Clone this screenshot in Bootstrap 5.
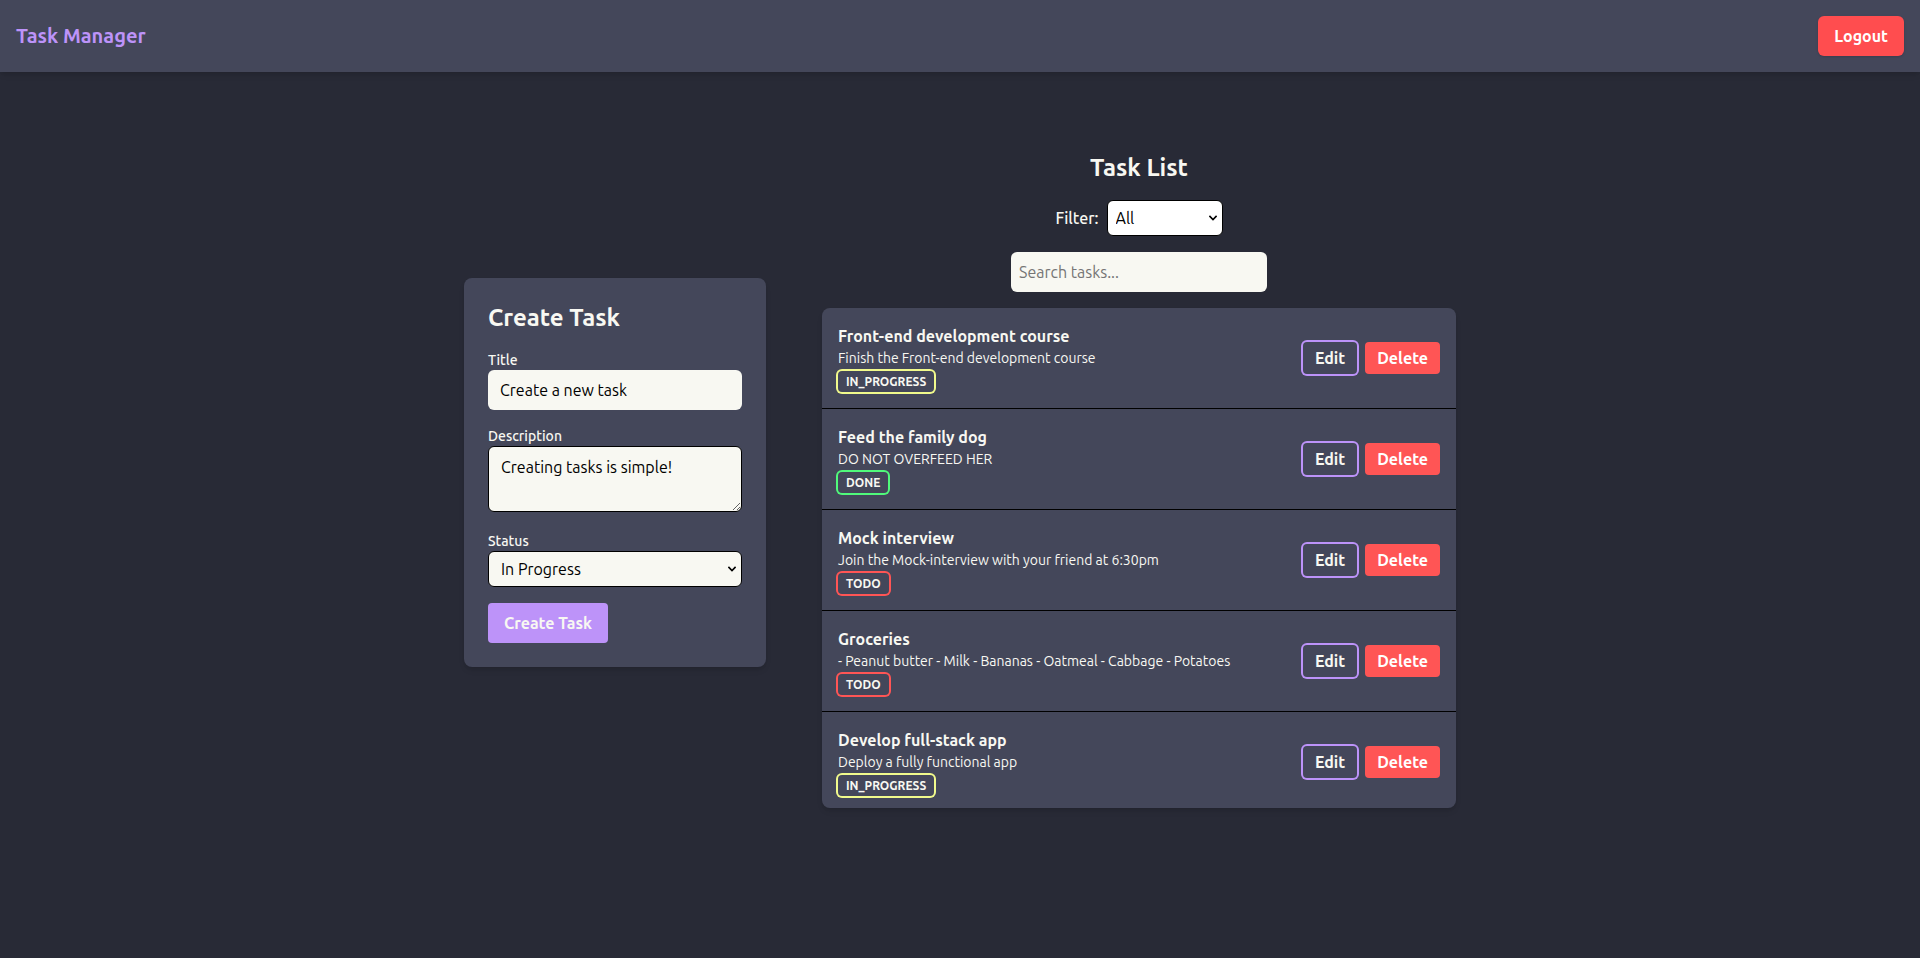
<!DOCTYPE html>
<html lang="en">
<head>
<meta charset="utf-8">
<meta name="viewport" content="width=device-width, initial-scale=1">
<title>Task Manager</title>
<link href="https://cdn.jsdelivr.net/npm/bootstrap@5.3.0/dist/css/bootstrap.min.css" rel="stylesheet">
<style>
  :root {
    --bg: #282a36;
    --panel: #44475a;
    --light: #f8f8f2;
    --purple: #bd93f9;
    --red: #ff5555;
    --green: #50fa7b;
    --yellow: #f1fa8c;
  }
  body {
    background: var(--bg);
    color: var(--light);
    font-family: Ubuntu, "Noto Sans", sans-serif;
    font-size: 16px;
    line-height: 24px;
  }
  .topbar {
    background: var(--panel);
    box-shadow: 0 4px 6px -1px rgba(0, 0, 0, .1), 0 2px 4px -2px rgba(0, 0, 0, .1);
  }
  .topbar .navbar-brand { color: var(--purple); font-size: 20px; line-height: 30px; }
  .btn {
    --bs-btn-border-width: 0;
    --bs-btn-font-weight: 600;
    --bs-btn-line-height: 24px;
    --bs-btn-padding-x: 16px;
    --bs-btn-padding-y: 8px;
    --bs-btn-border-radius: 4px;
  }
  .btn-logout {
    --bs-btn-border-radius: 6px;
    --bs-btn-color: #fff;
    --bs-btn-bg: #ff4d4f;
    --bs-btn-hover-color: #fff;
    --bs-btn-hover-bg: #e64547;
    box-shadow: 0 1px 3px rgba(0, 0, 0, .1), 0 1px 2px -1px rgba(0, 0, 0, .1);
  }
  .btn-create {
    --bs-btn-color: var(--light);
    --bs-btn-bg: var(--purple);
    --bs-btn-hover-color: var(--light);
    --bs-btn-hover-bg: #a97ef0;
  }
  .btn-row { --bs-btn-padding-x: 12px; --bs-btn-padding-y: 4px; }
  .btn-edit {
    --bs-btn-color: var(--light);
    --bs-btn-hover-color: var(--light);
    --bs-btn-hover-bg: #565a72;
    box-shadow: 0 0 0 2px var(--purple);
  }
  .btn-delete {
    --bs-btn-color: #fff;
    --bs-btn-bg: var(--red);
    --bs-btn-hover-color: #fff;
    --bs-btn-hover-bg: #e64a4a;
  }
  .board { max-width: 1024px; }
  .board-grid { display: grid; gap: 32px; }
  @media (min-width: 992px) {
    .board-grid { grid-template-columns: 302px minmax(0, 1fr); column-gap: 56px; }
  }
  .panel {
    background: var(--panel);
    border-radius: 8px;
    box-shadow: 0 4px 6px -1px rgba(0, 0, 0, .1), 0 2px 4px -2px rgba(0, 0, 0, .1);
  }
  .heading { font-size: 24px; line-height: 32px; font-weight: 600; }
  .field-label { display: block; font-size: 14px; line-height: 20px; font-weight: 500; }
  .field {
    display: block;
    width: 100%;
    padding: 8px 12px;
    border: 0;
    border-radius: 6px;
    background: var(--light);
    color: #000;
    line-height: 24px;
  }
  textarea.field, select.field { border: 1px solid #000; }
  .field-group-text { margin-bottom: 19px; }
  .chevron {
    height: 36px;
    appearance: none;
    background-image: url("data:image/svg+xml,%3Csvg xmlns='http://www.w3.org/2000/svg' width='10' height='6'%3E%3Cpath d='M1.4 .9 5 4.5 8.6 .9' fill='none' stroke='%23000' stroke-width='1.6'/%3E%3C/svg%3E");
    background-repeat: no-repeat;
    background-position: right 4px center;
  }
  select.field { padding: 5px 20px 5px 12px; }
  .filter-select {
    width: 116px;
    padding: 5px 20px 5px 8px;
    border: 1px solid #000;
    border-radius: 6px;
    background-color: #fff;
    color: #000;
  }
  .search-box { width: 256px; padding: 8px; }
  .search-box::placeholder { color: #757575; opacity: 1; }
  .task-list { max-height: 500px; overflow-y: auto; scrollbar-width: none; }
  .task-list::-webkit-scrollbar { display: none; }
  .task + .task { border-top: 1px solid #000; }
  .task-name { font-size: 16px; line-height: 24px; font-weight: 600; }
  .task-text { font-size: 14px; line-height: 20px; margin-bottom: 3px; }
  .task-status {
    padding: 2px 8px;
    border-radius: 4px;
    font-size: 12px;
    line-height: 17px;
    font-weight: 600;
    box-shadow: 0 0 0 2px var(--ring);
  }
  .is-progress { --ring: var(--yellow); }
  .is-done { --ring: var(--green); }
  .is-todo { --ring: var(--red); }
</style>
</head>
<body class="d-flex flex-column min-vh-100">
<nav class="topbar navbar p-3">
  <a class="navbar-brand fw-semibold p-0 m-0" href="#">Task Manager</a>
  <button type="button" class="btn btn-logout">Logout</button>
</nav>

<main class="board container-fluid px-3 py-5">
  <div class="board-grid align-items-center pt-3">
    <form class="panel p-4">
      <h2 class="heading mb-3">Create Task</h2>
      <div class="mb-3">
        <label class="field-label" for="title">Title</label>
        <input class="field" id="title" type="text" value="Create a new task">
      </div>
      <div class="field-group-text">
        <label class="field-label" for="description">Description</label>
        <textarea class="field" id="description" rows="2">Creating tasks is simple!</textarea>
      </div>
      <div class="mb-3">
        <label class="field-label" for="status">Status</label>
        <select class="field chevron" id="status">
          <option>To Do</option>
          <option selected>In Progress</option>
          <option>Done</option>
        </select>
      </div>
      <button type="button" class="btn btn-create">Create Task</button>
    </form>

    <section class="pt-3">
      <h2 class="heading text-center mb-3">Task List</h2>
      <div class="d-flex justify-content-center align-items-center gap-2 mb-3">
        <label class="fw-medium" for="filter">Filter:</label>
        <select class="filter-select chevron" id="filter">
          <option selected>All</option>
          <option>To Do</option>
          <option>In Progress</option>
          <option>Done</option>
        </select>
      </div>
      <input class="field search-box mx-auto mb-3" type="search" placeholder="Search tasks..." aria-label="Search tasks">

      <ul class="task-list panel list-unstyled mb-0">
        <li class="task d-flex justify-content-between align-items-center p-3">
          <div>
            <h3 class="task-name mb-0">Front-end development course</h3>
            <p class="task-text">Finish the Front-end development course</p>
            <div class="d-flex"><span class="task-status is-progress">IN_PROGRESS</span></div>
          </div>
          <div class="d-flex gap-2">
            <button type="button" class="btn btn-row btn-edit">Edit</button>
            <button type="button" class="btn btn-row btn-delete">Delete</button>
          </div>
        </li>
        <li class="task d-flex justify-content-between align-items-center p-3">
          <div>
            <h3 class="task-name mb-0">Feed the family dog</h3>
            <p class="task-text">DO NOT OVERFEED HER</p>
            <div class="d-flex"><span class="task-status is-done">DONE</span></div>
          </div>
          <div class="d-flex gap-2">
            <button type="button" class="btn btn-row btn-edit">Edit</button>
            <button type="button" class="btn btn-row btn-delete">Delete</button>
          </div>
        </li>
        <li class="task d-flex justify-content-between align-items-center p-3">
          <div>
            <h3 class="task-name mb-0">Mock interview</h3>
            <p class="task-text">Join the Mock-interview with your friend at 6:30pm</p>
            <div class="d-flex"><span class="task-status is-todo">TODO</span></div>
          </div>
          <div class="d-flex gap-2">
            <button type="button" class="btn btn-row btn-edit">Edit</button>
            <button type="button" class="btn btn-row btn-delete">Delete</button>
          </div>
        </li>
        <li class="task d-flex justify-content-between align-items-center p-3">
          <div>
            <h3 class="task-name mb-0">Groceries</h3>
            <p class="task-text">- Peanut butter - Milk - Bananas - Oatmeal - Cabbage - Potatoes</p>
            <div class="d-flex"><span class="task-status is-todo">TODO</span></div>
          </div>
          <div class="d-flex gap-2">
            <button type="button" class="btn btn-row btn-edit">Edit</button>
            <button type="button" class="btn btn-row btn-delete">Delete</button>
          </div>
        </li>
        <li class="task d-flex justify-content-between align-items-center p-3">
          <div>
            <h3 class="task-name mb-0">Develop full-stack app</h3>
            <p class="task-text">Deploy a fully functional app</p>
            <div class="d-flex"><span class="task-status is-progress">IN_PROGRESS</span></div>
          </div>
          <div class="d-flex gap-2">
            <button type="button" class="btn btn-row btn-edit">Edit</button>
            <button type="button" class="btn btn-row btn-delete">Delete</button>
          </div>
        </li>
      </ul>
    </section>
  </div>
</main>
<script src="https://cdn.jsdelivr.net/npm/bootstrap@5.3.0/dist/js/bootstrap.bundle.min.js"></script>
</body>
</html>
